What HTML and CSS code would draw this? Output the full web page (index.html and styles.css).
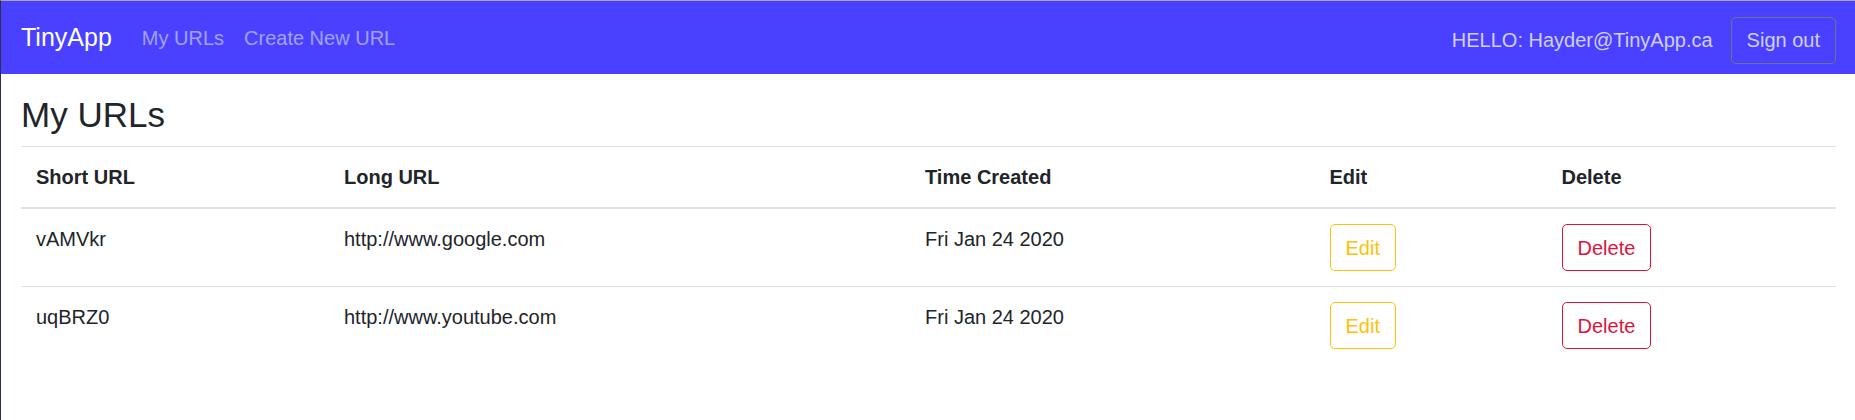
FILE: index.html
```html
<!DOCTYPE html>
<html lang="en">
<head>
<meta charset="utf-8">
<title>TinyApp</title>
<link rel="stylesheet" href="styles.css">
</head>
<body class="page">
<nav class="navbar">
  <a class="brand" href="#">TinyApp</a>
  <ul class="nav-links">
    <li><a class="nav-link" href="#">My URLs</a></li>
    <li><a class="nav-link" href="#">Create New URL</a></li>
  </ul>
  <div class="user">
    <span class="hello">HELLO: Hayder@TinyApp.ca</span>
    <button class="btn btn-signout" type="button">Sign out</button>
  </div>
</nav>
<main class="container">
  <h3 class="title">My URLs</h3>
  <table class="url-table">
    <thead>
      <tr>
        <th class="col-short">Short URL</th>
        <th class="col-long">Long URL</th>
        <th class="col-time">Time Created</th>
        <th class="col-edit">Edit</th>
        <th class="col-delete">Delete</th>
      </tr>
    </thead>
    <tbody>
      <tr>
        <td>vAMVkr</td>
        <td>http://www.google.com</td>
        <td>Fri Jan 24 2020</td>
        <td><button class="btn btn-edit" type="button">Edit</button></td>
        <td><button class="btn btn-delete" type="button">Delete</button></td>
      </tr>
      <tr>
        <td>uqBRZ0</td>
        <td>http://www.youtube.com</td>
        <td>Fri Jan 24 2020</td>
        <td><button class="btn btn-edit" type="button">Edit</button></td>
        <td><button class="btn btn-delete" type="button">Delete</button></td>
      </tr>
    </tbody>
  </table>
</main>
</body>
</html>
```
FILE: styles.css
```css
* { box-sizing: border-box; }

html, body { height: 100%; }

.page {
  margin: 0;
  border-top: 1px solid #a6a6a6;
  border-left: 1px solid #2d2f48;
  font-family: "Liberation Sans", Arial, sans-serif;
  font-size: 20px;
  line-height: 1.5;
  color: #212529;
  background: #ffffff;
}

.navbar {
  display: flex;
  align-items: center;
  height: 73px;
  padding: 0 19px 0 20px;
  background: #4941ff;
}

.brand {
  font-size: 25px;
  line-height: 37.5px;
  color: #ffffff;
  text-decoration: none;
  margin-right: 20px;
}

.nav-links {
  display: flex;
  list-style: none;
  margin: 0;
  padding: 0;
}

.nav-link {
  display: block;
  padding: 0 10px;
  line-height: 30px;
  color: rgba(255, 255, 255, 0.5);
  text-decoration: none;
}

.user {
  margin-left: auto;
  margin-top: 5px;
  display: flex;
  align-items: center;
}

.hello {
  color: rgba(255, 255, 255, 0.75);
  margin-right: 18px;
  line-height: 30px;
}

.btn {
  font-family: inherit;
  font-size: 20px;
  line-height: 30px;
  padding: 7.5px 15px;
  border: 1px solid transparent;
  border-radius: 5px;
  background: transparent;
  cursor: pointer;
}

.btn-signout {
  border-color: #6c757d;
  color: rgba(255, 255, 255, 0.75);
}

.btn-edit {
  border-color: #ffc107;
  color: #ffc107;
}

.btn-delete {
  border-color: #dc143c;
  color: #dc143c;
}

.container {
  padding: 0 19px 0 20px;
}

.title {
  margin: 20px 0 10px;
  font-size: 35px;
  font-weight: 500;
  line-height: 1.2;
}

.url-table {
  width: 100%;
  border-collapse: collapse;
  table-layout: fixed;
}

.url-table th,
.url-table td {
  text-align: left;
  vertical-align: top;
  padding: 15px;
  border-top: 1px solid #dee2e6;
}

.url-table thead th {
  font-weight: bold;
  vertical-align: bottom;
  border-bottom: 2px solid #dee2e6;
}

.col-short { width: 308px; }
.col-long { width: 581px; }
.col-time { width: 404.5px; }
.col-edit { width: 232px; }
```
